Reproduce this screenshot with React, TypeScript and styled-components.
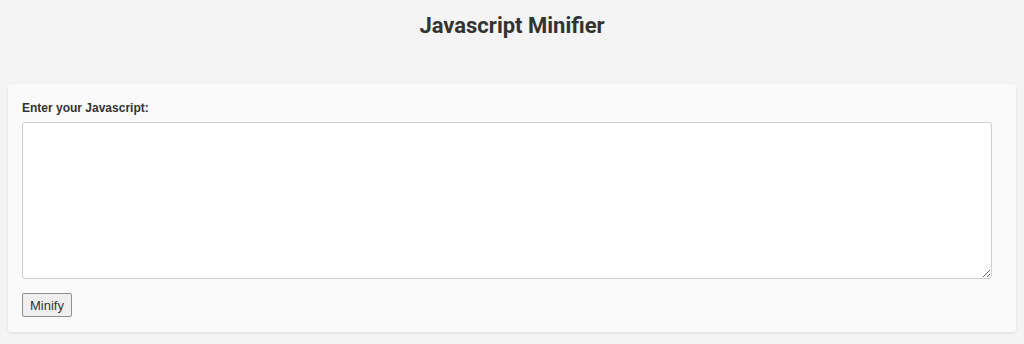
import styled, { createGlobalStyle } from "styled-components";

const GlobalStyle = createGlobalStyle`
  html, body {
    margin: 0;
    padding: 0;
    background: #f4f4f4;
  }
  body {
    padding: 8px;
    font-family: "Liberation Sans", Arial, sans-serif;
    color: #333;
  }
`;

const Title = styled.h1`
  box-sizing: border-box;
  margin: 0;
  padding-top: 5px;
  height: 76px;
  text-align: center;
  font-family: Roboto, "Liberation Sans", sans-serif;
  font-size: 22px;
  font-weight: 700;
  color: #333;
`;

const Card = styled.div`
  background: #fafafa;
  border-radius: 3px;
  box-shadow: 0 1px 3px rgba(0, 0, 0, 0.1);
  padding: 17px 24px 15px 14px;
  display: flex;
  flex-direction: column;
  align-items: flex-start;
`;

const Label = styled.label`
  font-size: 12px;
  font-weight: 700;
  color: #333;
  margin-bottom: 7px;
  line-height: 14px;
`;

const CodeInput = styled.textarea`
  box-sizing: border-box;
  width: 100%;
  height: 157px;
  border: 1px solid #cfcfcf;
  border-radius: 3px;
  background: #fff;
  resize: vertical;
  margin: 0 0 14px;
  padding: 4px;
  font-family: "Liberation Mono", monospace;
  font-size: 12px;
`;

const MinifyButton = styled.button`
  height: 24px;
  padding: 0 7px;
  font-family: "Liberation Sans", Arial, sans-serif;
  font-size: 13px;
  color: #333;
  background: #efefef;
  border: 1px solid #8f8f8f;
  border-radius: 2px;
  cursor: pointer;
`;

export default function App() {
  return (
    <>
      <GlobalStyle />
      <Title>Javascript Minifier</Title>
      <Card>
        <Label htmlFor="js">Enter your Javascript:</Label>
        <CodeInput id="js" />
        <MinifyButton>Minify</MinifyButton>
      </Card>
    </>
  );
}
